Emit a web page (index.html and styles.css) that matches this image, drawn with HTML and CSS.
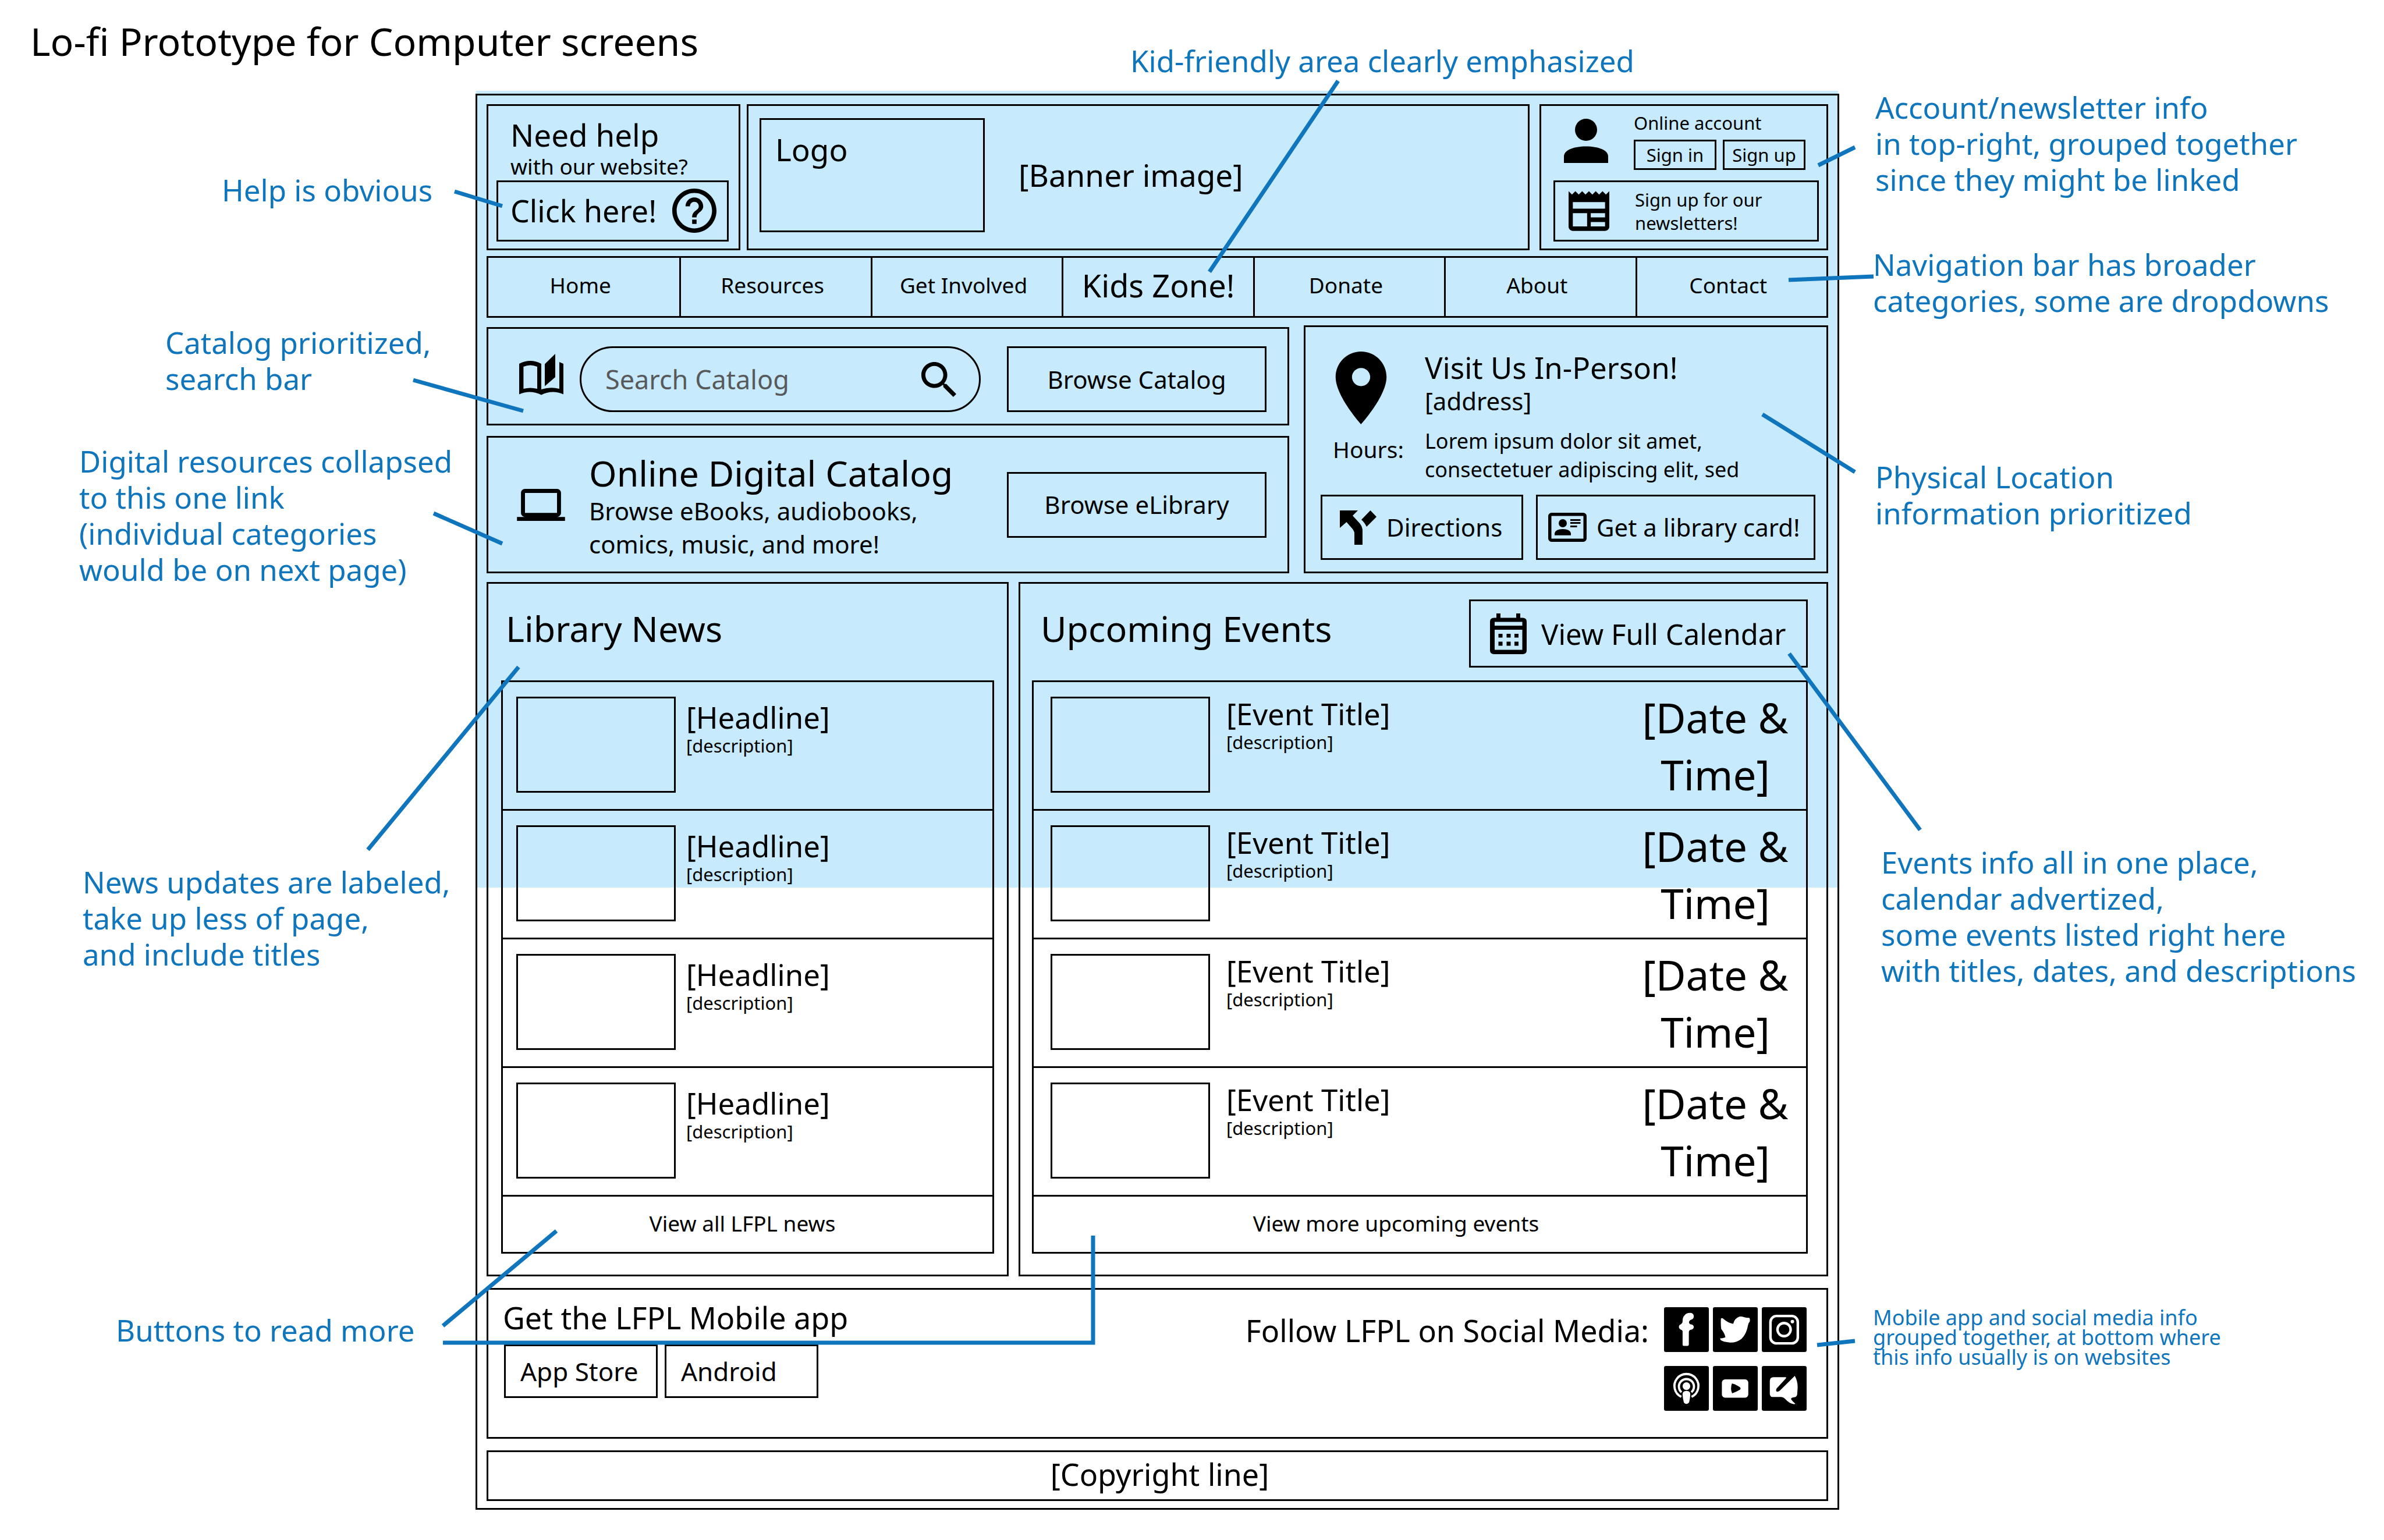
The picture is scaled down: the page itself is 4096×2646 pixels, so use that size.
FILE: index.html
```html
<!DOCTYPE html>
<html lang="en">
<head>
<meta charset="utf-8">
<meta name="viewport" content="width=device-width, initial-scale=1">
<title>Lo-fi Prototype for Computer screens</title>
<link rel="stylesheet" href="styles.css">
</head>
<body>
<div class="board">
  <h1 class="board-title">Lo-fi Prototype for Computer screens</h1>

  <div class="frame">
    <header class="top">
      <section class="panel help">
        <p class="help-title">Need help</p>
        <p class="help-sub">with our website?</p>
        <button class="box help-button" type="button">Click here!
          <svg class="icon-help" viewBox="2 2 20 20" aria-hidden="true"><path d="M11 18h2v-2h-2v2zm1-16C6.48 2 2 6.48 2 12s4.48 10 10 10 10-4.48 10-10S17.52 2 12 2zm0 18c-4.41 0-8-3.59-8-8s3.59-8 8-8 8 3.59 8 8-3.59 8-8 8zm0-14c-2.21 0-4 1.79-4 4h2c0-1.1.9-2 2-2s2 .9 2 2c0 2-3 1.75-3 5h2c0-2.25 3-2.5 3-5 0-2.21-1.79-4-4-4z"/></svg>
        </button>
      </section>
      <section class="panel banner">
        <div class="box logo">Logo</div>
        <p class="banner-text">[Banner image]</p>
      </section>
      <section class="panel account">
        <div class="account-row">
          <svg class="icon-person" viewBox="4 4 16 16" aria-hidden="true"><circle cx="12" cy="8" r="4"/><path d="M4 20v-2.4C4 15.4 7.5 14 12 14s8 1.400 8 3.600V20z"/></svg>
          <div>
            <p>Online account</p>
            <div class="sign-buttons">
              <button class="box" type="button">Sign in</button>
              <button class="box" type="button">Sign up</button>
            </div>
          </div>
        </div>
        <button class="box newsletter" type="button">
          <svg class="icon-news" viewBox="0 0 20 19.500" aria-hidden="true"><path fill-rule="evenodd" d="M0 0l1.670 1.700L3.330 0 5 1.700 6.670 0l1.660 1.700L10 0l1.670 1.700L13.330 0 15 1.700 16.670 0l1.660 1.700L20 0v17.500a2 2 0 0 1-2 2H2a2 2 0 0 1-2-2zM2.100 5.400v3.200h15.800V5.400zM2.100 10.800v6.500h7v-6.500zM10.900 10.800v2.100h7v-2.100zM10.900 15.200v2.100h7v-2.100z"/></svg>
          <span>Sign up for our<br>newsletters!</span>
        </button>
      </section>
    </header>

    <nav class="box nav">
      <a href="#home">Home</a>
      <a href="#resources">Resources</a>
      <a href="#involved">Get Involved</a>
      <a class="kids" href="#kids">Kids Zone!</a>
      <a href="#donate">Donate</a>
      <a href="#about">About</a>
      <a href="#contact">Contact</a>
    </nav>

    <div class="middle">
      <div class="catalogs">
        <form class="panel catalog">
          <svg class="icon-book" viewBox="0 0 76 87" aria-hidden="true"><path fill-rule="evenodd" d="M0 17Q19 7 38 17V61Q54 56 69 60V14L76 17V69.500Q57 61 38 70.600Q19 61 0 69.500ZM7.400 22V60Q19 57 31 60V22Q19 17 7.400 22ZM44 17.600L62 0V40L44 55.600Z"/></svg>
          <div class="search">
            <input type="search" aria-label="Search Catalog" placeholder="Search Catalog">
            <button type="button" aria-label="Search"><svg viewBox="3 3 17.490 17.490" aria-hidden="true"><path d="M15.500 14h-.79l-.28-.27C15.410 12.590 16 11.110 16 9.500 16 5.910 13.090 3 9.500 3S3 5.910 3 9.500 5.910 16 9.500 16c1.610 0 3.090-.59 4.230-1.570l.27.28v.79l5 4.990L20.490 19l-4.990-5zm-6 0C7.010 14 5 11.990 5 9.500S7.010 5 9.500 5 14 7.010 14 9.500 11.990 14 9.500 14z"/></svg></button>
          </div>
          <button class="box browse" type="button">Browse Catalog</button>
        </form>
        <section class="panel digital">
          <svg class="icon-laptop" viewBox="0 4 24 16" aria-hidden="true"><path d="M20 18c1.100 0 1.990-.9 1.990-2L22 6c0-1.100-.9-2-2-2H4c-1.100 0-2 .9-2 2v10c0 1.100.9 2 2 2H0v2h24v-2h-4zM4 6h16v10H4V6z"/></svg>
          <div class="digital-text">
            <h2>Online Digital Catalog</h2>
            <p>Browse eBooks, audiobooks,<br>comics, music, and more!</p>
          </div>
          <button class="box browse" type="button">Browse eLibrary</button>
        </section>
      </div>
      <section class="panel visit">
        <div class="visit-info">
          <div class="visit-side">
            <svg class="icon-pin" viewBox="4.400 2 15.200 20" aria-hidden="true"><path d="M12 2C8.130 2 5 5.130 5 9c0 5.250 7 13 7 13s7-7.750 7-13c0-3.870-3.130-7-7-7zm0 9.500c-1.380 0-2.500-1.120-2.500-2.500s1.120-2.500 2.500-2.500 2.500 1.120 2.500 2.500-1.120 2.500-2.500 2.500z"/></svg>
            <p class="hours">Hours:</p>
          </div>
          <div>
            <h2>Visit Us In-Person!</h2>
            <p class="address">[address]</p>
            <p class="hours-text">Lorem ipsum dolor sit amet,<br>consectetuer adipiscing elit, sed</p>
          </div>
        </div>
        <div class="visit-buttons">
          <button class="box directions" type="button">
            <svg class="icon-fork" viewBox="0 0 63 59" aria-hidden="true"><path d="M0 0H31L22 9L34 22Q39 28 39 35V59H25V38Q24 35 22 32L11.500 20L0 30ZM52.500 0L63 11L46 28Q42 20 37 16Z"/></svg>
            Directions
          </button>
          <button class="box card" type="button">
            <svg class="icon-card" viewBox="0 0 66 50" aria-hidden="true"><rect x="2.750" y="2.750" width="60.500" height="44.500" rx="3" fill="none" stroke="currentColor" stroke-width="5.500"/><circle cx="25" cy="18" r="7"/><path d="M11 38.700V35Q13 28 25 28T39 35V38.700ZM38 11h17.500v3H38zM38 16h17.500v3H38zM38 22h11.500v3H38z"/></svg>
            Get a library card!
          </button>
        </div>
      </section>
    </div>

    <div class="feeds">
      <section class="panel feed news">
        <div class="feed-head"><h2>Library News</h2></div>
        <ul class="box list">
          <li><div class="box thumb"></div><div class="item"><h3>[Headline]</h3><p>[description]</p></div></li>
          <li><div class="box thumb"></div><div class="item"><h3>[Headline]</h3><p>[description]</p></div></li>
          <li><div class="box thumb"></div><div class="item"><h3>[Headline]</h3><p>[description]</p></div></li>
          <li><div class="box thumb"></div><div class="item"><h3>[Headline]</h3><p>[description]</p></div></li>
          <li class="more"><a href="#news">View all LFPL news</a></li>
        </ul>
      </section>
      <section class="panel feed events">
        <div class="feed-head">
          <h2>Upcoming Events</h2>
          <button class="box calendar" type="button">
            <svg class="icon-calendar" viewBox="0 0 63 70" aria-hidden="true"><path fill-rule="evenodd" d="M11 0h7v7.500h27V0h7v7.500h4Q63 7.500 63 14V63.500Q63 70 56 70H7Q0 70 0 63.500V14Q0 7.500 7 7.500h4ZM8 14.500v6.500h47.500v-6.500ZM8 28v34.500h47.500V28Z"/><path d="M14.500 35h7v6.500h-7zM28.500 35h7v6.500h-7zM42 35h7v6.500h-7zM14.500 48.500h7v7h-7zM28.500 48.500h7v7h-7zM42 48.500h7v7h-7z"/></svg>
            View Full Calendar
          </button>
        </div>
        <ul class="box list">
          <li><div class="box thumb"></div><div class="item"><h3>[Event Title]</h3><p>[description]</p></div><p class="date">[Date &amp;<br>Time]</p></li>
          <li><div class="box thumb"></div><div class="item"><h3>[Event Title]</h3><p>[description]</p></div><p class="date">[Date &amp;<br>Time]</p></li>
          <li><div class="box thumb"></div><div class="item"><h3>[Event Title]</h3><p>[description]</p></div><p class="date">[Date &amp;<br>Time]</p></li>
          <li><div class="box thumb"></div><div class="item"><h3>[Event Title]</h3><p>[description]</p></div><p class="date">[Date &amp;<br>Time]</p></li>
          <li class="more"><a href="#events">View more upcoming events</a></li>
        </ul>
      </section>
    </div>

    <footer class="panel footer">
      <div class="apps">
        <p>Get the LFPL Mobile app</p>
        <div class="app-buttons">
          <button class="box" type="button">App Store</button>
          <button class="box" type="button">Android</button>
        </div>
      </div>
      <div class="social">
        <p>Follow LFPL on Social Media:</p>
        <div class="social-icons">
          <a href="#facebook" aria-label="Facebook"><svg viewBox="0 0 280 280"><rect width="280" height="280" rx="12"/><path fill="#fff" d="M116 234V150Q114 142 106 141Q93 136 93 123Q93 110 106 106Q116 100 116 90V82Q116 56 140 40Q155 34 172 36Q186 42 186 58Q185 72 172 77Q156 82 156 95Q158 106 168 107Q186 110 186 124Q184 140 168 141Q156 142 155 156V234Q154 242 146 242H124Q116 242 116 234Z"/></svg></a>
          <a href="#twitter" aria-label="Twitter"><svg viewBox="0 0 280 280"><rect width="280" height="280" rx="12"/><path fill="#fff" d="M50 72Q54 66 62 70Q96 100 127 104Q134 70 165 59Q180 57 196 63Q214 68 227 66Q234 76 230 90Q220 100 218 118Q208 170 178 198Q148 222 108 221Q64 216 50 206Q44 200 46 194Q60 196 78 188Q74 164 52 136Q48 110 50 72Z"/></svg></a>
          <a href="#instagram" aria-label="Instagram"><svg viewBox="0 0 280 280"><rect width="280" height="280" rx="12"/><g fill="none" stroke="#fff" stroke-width="16"><rect x="54" y="55" width="171" height="171" rx="38"/><circle cx="139" cy="140" r="41"/></g><circle cx="191" cy="90" r="11" fill="#fff"/></svg></a>
          <a href="#podcast" aria-label="Podcast"><svg viewBox="0 0 280 280"><rect width="280" height="280" rx="12"/><g fill="none" stroke="#fff" stroke-width="14"><path d="M108 193A75 75 0 1 1 172 193"/><path d="M109 164A47 47 0 1 1 171 164"/></g><g fill="#fff"><circle cx="140" cy="126" r="24"/><path d="M140 155Q164 156 164 176Q162 210 156 228Q150 237 140 237Q129 237 124 228Q117 205 116 176Q116 156 140 155Z"/></g></svg></a>
          <a href="#youtube" aria-label="YouTube"><svg viewBox="0 0 280 280"><rect width="280" height="280" rx="12"/><rect x="56" y="84" width="165" height="114" rx="20" fill="#fff"/><path d="M119 109Q150 118 170 134Q176 141 170 147Q150 160 120 171Q107 140 119 109Z"/></svg></a>
          <a href="#blog" aria-label="Blog"><svg viewBox="0 0 280 280"><rect width="280" height="280" rx="12"/><path fill="#fff" d="M50 92Q52 70 72 70H152L150 78L93 140Q86 152 92 159Q102 164 113 154L206 62Q228 100 223 150L221 178Q218 195 200 195Q184 197 182 206Q192 222 210 236Q205 240 195 237Q170 232 150 210Q135 194 118 194H66Q52 192 50 175Z"/></svg></a>
        </div>
      </div>
    </footer>

    <div class="box copyright">[Copyright line]</div>
  </div>

  <!-- Callouts placed freely around the wireframe -->
  <p class="note note-kids">Kid-friendly area clearly emphasized</p>
  <p class="note note-help">Help is obvious</p>
  <p class="note note-catalog">Catalog prioritized,<br>search bar</p>
  <p class="note note-digital">Digital resources collapsed<br>to this one link<br>(individual categories<br>would be on next page)</p>
  <p class="note note-news">News updates are labeled,<br>take up less of page,<br>and include titles</p>
  <p class="note note-more">Buttons to read more</p>
  <p class="note note-account">Account/newsletter info<br>in top-right, grouped together<br>since they might be linked</p>
  <p class="note note-nav">Navigation bar has broader<br>categories, some are dropdowns</p>
  <p class="note note-visit">Physical Location<br>information prioritized</p>
  <p class="note note-events">Events info all in one place,<br>calendar advertized,<br>some events listed right here<br>with titles, dates, and descriptions</p>
  <p class="note note-social">Mobile app and social media info<br>grouped together, at bottom where<br>this info usually is on websites</p>

  <svg class="leaders" viewBox="0 0 4096 2646" aria-hidden="true">
    <path d="M781 329L863 354M2299 139L2078 467M3187 253L3124 284M3219 475L3073 481M710 653L899 706M745 882L863 934M3187 811L3028 712M3299 1426L3074 1123M632 1460L891 1146M761 2278L956 2115M761 2307H1878V2123M3187 2304L3122 2311"/>
  </svg>
</div>
</body>
</html>
```
FILE: styles.css
```css
* { box-sizing: border-box; }

:root {
  --ink: #000;
  --note: #0f75bc;
  --sky: #c7eafd;
}

body {
  margin: 0;
  background: #fff;
  color: var(--ink);
  font-family: "Noto Sans", "Open Sans", sans-serif;
  font-size: 31px;
  line-height: 40px;
}

h1, h2, h3, p, ul { margin: 0; padding: 0; font-weight: 400; }
ul { list-style: none; }
a { color: inherit; text-decoration: none; }
svg { display: block; flex: none; fill: currentColor; }
button {
  margin: 0;
  padding: 0;
  border: 0;
  background: none;
  color: inherit;
  font: inherit;
  cursor: pointer;
}

.board { position: relative; isolation: isolate; padding-bottom: 52px; }
.board-title { padding: 25px 0 46px 52px; font-size: 66px; line-height: 90px; }

.frame {
  position: relative;
  display: flex;
  flex-direction: column;
  margin: 0 936px 0 817px;
  padding: 15px 16px 12px;
  border: 3px solid var(--ink);
}
/* area visible before scrolling */
.frame::before {
  content: "";
  position: absolute;
  z-index: -1;
  top: -8px;
  left: -2px;
  right: -1px;
  height: 1369px;
  background: var(--sky);
}

.panel, .box { border: 3px solid var(--ink); }

/* Header */
.top { display: flex; min-height: 251px; }
.help { display: flex; flex-direction: column; width: 436px; margin-right: 11px; padding: 20px 17px 12px 14px; }
.help-title { padding-left: 24px; font-size: 53px; line-height: 60px; }
.help-sub { padding-left: 24px; font-size: 37px; line-height: 48px; }
.help-button {
  flex: 1;
  display: flex;
  align-items: center;
  justify-content: space-between;
  padding: 0 18px 2px 21px;
  font-size: 52px;
  line-height: 60px;
}
.icon-help { width: 76px; height: 76px; }

.banner { flex: 1; display: flex; align-items: flex-start; gap: 58px; margin-right: 17px; padding: 21px 19px; }
.logo { width: 387px; height: 196px; padding: 21px 24px; font-size: 53px; line-height: 60px; }
.banner-text { align-self: center; padding-bottom: 8px; font-size: 53px; line-height: 60px; }

.account { display: flex; flex-direction: column; justify-content: space-between; width: 496px; padding: 9px 13px 12px 21px; }
.account-row { display: flex; align-items: center; gap: 44px; padding-left: 18px; }
.icon-person { width: 76px; height: 76px; }
.sign-buttons { display: flex; gap: 11px; padding-top: 9px; }
.sign-buttons .box { width: 142px; height: 52px; }
.newsletter { display: flex; align-items: center; gap: 44px; height: 105px; padding-left: 23px; text-align: left; }
.icon-news { width: 70px; height: 69px; }

/* Navigation */
.nav { display: grid; grid-template-columns: repeat(7, 1fr); margin-top: 10px; min-height: 106px; font-size: 37px; line-height: 60px; }
.nav a { display: flex; align-items: center; justify-content: center; padding: 0 12px 6px 0; }
.nav a + a { border-left: 3px solid var(--ink); }
.nav .kids { padding-right: 0; font-size: 54px; }

/* Catalog and visit */
.middle { display: flex; align-items: flex-end; gap: 25px; margin-top: 13px; }
.catalogs { flex: 1; min-width: 0; display: flex; flex-direction: column; gap: 18px; }
.catalog { display: flex; align-items: center; padding: 30px 36px 20px 53px; }
.icon-book { width: 76px; height: 87px; margin-right: 28px; }
.search {
  flex: 1;
  min-width: 0;
  display: flex;
  align-items: center;
  height: 113px;
  margin-right: 45px;
  padding: 0 39px 0 41px;
  border: 3px solid var(--ink);
  border-radius: 57px;
}
.search input {
  flex: 1;
  min-width: 0;
  padding: 0;
  border: 0;
  outline: 0;
  background: none;
  font: inherit;
  font-size: 45px;
  line-height: 60px;
}
.search input::placeholder { color: #58595b; opacity: 1; }
.search svg { width: 60px; height: 60px; }
.browse { flex: none; width: 446px; height: 113px; font-size: 42px; }

.digital { display: flex; align-items: center; min-height: 236px; padding: 0 36px 0 49px; }
.icon-laptop { width: 83px; height: 55px; margin-right: 41px; }
.digital-text { flex: 1; min-width: 0; padding-top: 6px; font-size: 42px; line-height: 57px; }
.digital-text h2 { font-size: 61px; line-height: 72px; }

.visit { flex: none; width: 901px; padding: 38px 19px 20px 26px; }
.visit-info { display: flex; padding-left: 21px; }
.visit-side { width: 158px; padding-top: 4px; }
.icon-pin { width: 97px; height: 125px; }
.hours { padding-top: 18px; font-size: 39px; line-height: 49px; }
.visit h2 { font-size: 51px; line-height: 62px; }
.address { font-size: 42px; line-height: 54px; }
.hours-text { padding-top: 17px; font-size: 36px; line-height: 49px; }
.visit-buttons { display: flex; gap: 22px; margin-top: 19px; }
.visit-buttons .box { display: flex; align-items: center; gap: 17px; height: 112px; font-size: 42px; white-space: nowrap; }
.directions { width: 348px; padding-left: 30px; }
.card { flex: 1; padding-left: 18px; }
.icon-fork { width: 63px; height: 59px; }
.icon-card { width: 66px; height: 50px; }

/* News and events */
.feeds { display: flex; gap: 17px; margin-top: 15px; }
.news { width: 897px; padding: 0 22px 36px; }
.events { flex: 1; padding: 0 32px 36px 20px; }
.feed-head { display: flex; align-items: flex-start; justify-content: space-between; min-height: 166px; padding: 27px 0 22px; }
.feed-head h2 { padding: 14px 0 0 8px; font-size: 61px; line-height: 72px; }
.events .feed-head h2 { padding-left: 15px; }
.calendar { display: flex; align-items: center; gap: 25px; width: 582px; height: 117px; padding-left: 33px; font-size: 49px; }
.icon-calendar { width: 63px; height: 70px; }

.list li { display: flex; height: 221px; }
.list li:not(.more) { border-bottom: 3px solid var(--ink); }
.thumb { width: 274px; height: 165px; margin: 25px 18px 0 23px; }
.events .thumb { margin: 25px 28px 0 29px; }
.item { flex: 1; padding-top: 30px; font-size: 31px; line-height: 38px; }
.events .item { padding-top: 24px; }
.item h3 { font-size: 51px; line-height: 60px; }
.date { width: 280px; margin-right: 16px; padding-top: 12px; font-size: 71px; line-height: 98px; text-align: center; }
.list .more { align-items: center; justify-content: center; height: 95px; padding: 0 18px 4px 0; font-size: 37px; }
.events .more { padding-right: 82px; }

/* Footer */
.footer { display: flex; justify-content: space-between; min-height: 259px; margin-top: 20px; padding: 18px 34px 0 25px; }
.apps { font-size: 52px; line-height: 60px; }
.app-buttons { display: flex; gap: 12px; padding: 16px 0 0 2px; }
.app-buttons .box { width: 264px; height: 92px; padding-left: 25px; font-size: 44px; text-align: left; }
.social { display: flex; align-items: flex-start; gap: 26px; padding-top: 12px; }
.social p { padding-top: 10px; font-size: 52px; line-height: 60px; }
.social-icons { display: grid; grid-template-columns: repeat(3, 77px); gap: 24px 7px; }
.copyright { margin-top: 20px; padding: 8px 0 13px 8px; font-size: 52px; line-height: 60px; text-align: center; }

/* Callouts */
.note { position: absolute; color: var(--note); font-size: 51px; line-height: 62px; white-space: nowrap; }
.note-kids { top: 73px; left: 1942px; }
.note-help { top: 295px; left: 381px; }
.note-catalog { top: 557px; left: 284px; }
.note-digital { top: 761px; left: 136px; }
.note-news { top: 1484px; left: 142px; }
.note-more { top: 2254px; left: 199px; }
.note-account { top: 153px; left: 3222px; }
.note-nav { top: 423px; left: 3218px; }
.note-visit { top: 788px; left: 3222px; }
.note-events { top: 1450px; left: 3232px; }
.note-social { top: 2247px; left: 3218px; font-size: 36px; line-height: 34px; }
.leaders { position: absolute; top: 0; left: 0; width: 100%; fill: none; stroke: var(--note); stroke-width: 7; pointer-events: none; }
```
